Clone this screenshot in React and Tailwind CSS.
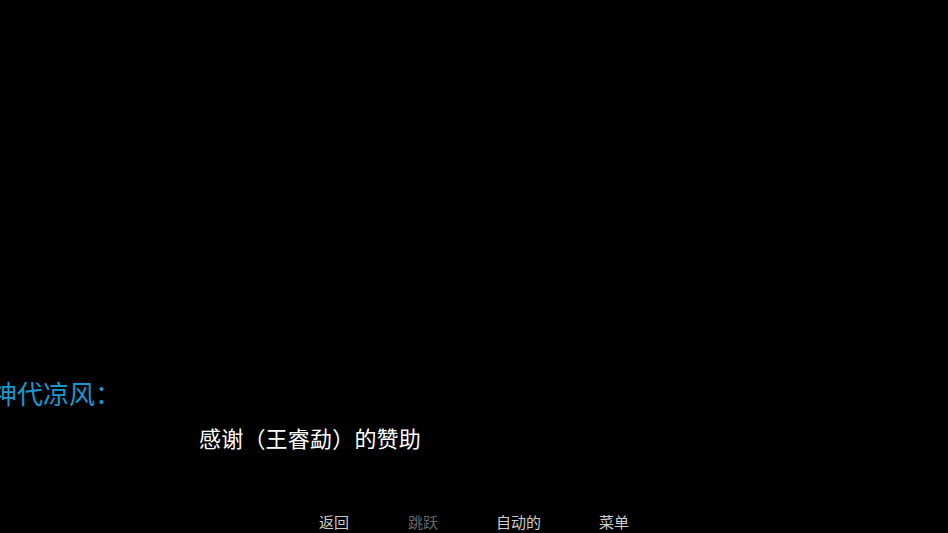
import React from "react";

export default function App() {
  const font = { fontFamily: '"Noto Sans CJK SC", "Noto Sans", sans-serif' };
  return (
    <div className="w-[948px] h-[533px] bg-black overflow-hidden flex flex-col pt-[380px]" style={font}>
      <div className="ml-[-9px] text-[26px] leading-none h-[26px] text-[#1a98cc] whitespace-nowrap">神代凉风：</div>
      <div className="ml-[199px] mt-[20px] text-[22px] leading-none h-[22px] text-white whitespace-nowrap tracking-[0.2px]">感谢（王睿勐）的赞助</div>
      <div className="mt-[66px] pl-[319px] flex gap-[59px] text-[15px] leading-none h-[15px] whitespace-nowrap">
        <span className="text-[#cccccc]">返回</span>
        <span className="text-[#666666]">跳跃</span>
        <span className="text-[#cccccc] ml-[-1px]">自动的</span>
        <span className="text-[#cccccc] ml-[-1px]">菜单</span>
      </div>
    </div>
  );
}
